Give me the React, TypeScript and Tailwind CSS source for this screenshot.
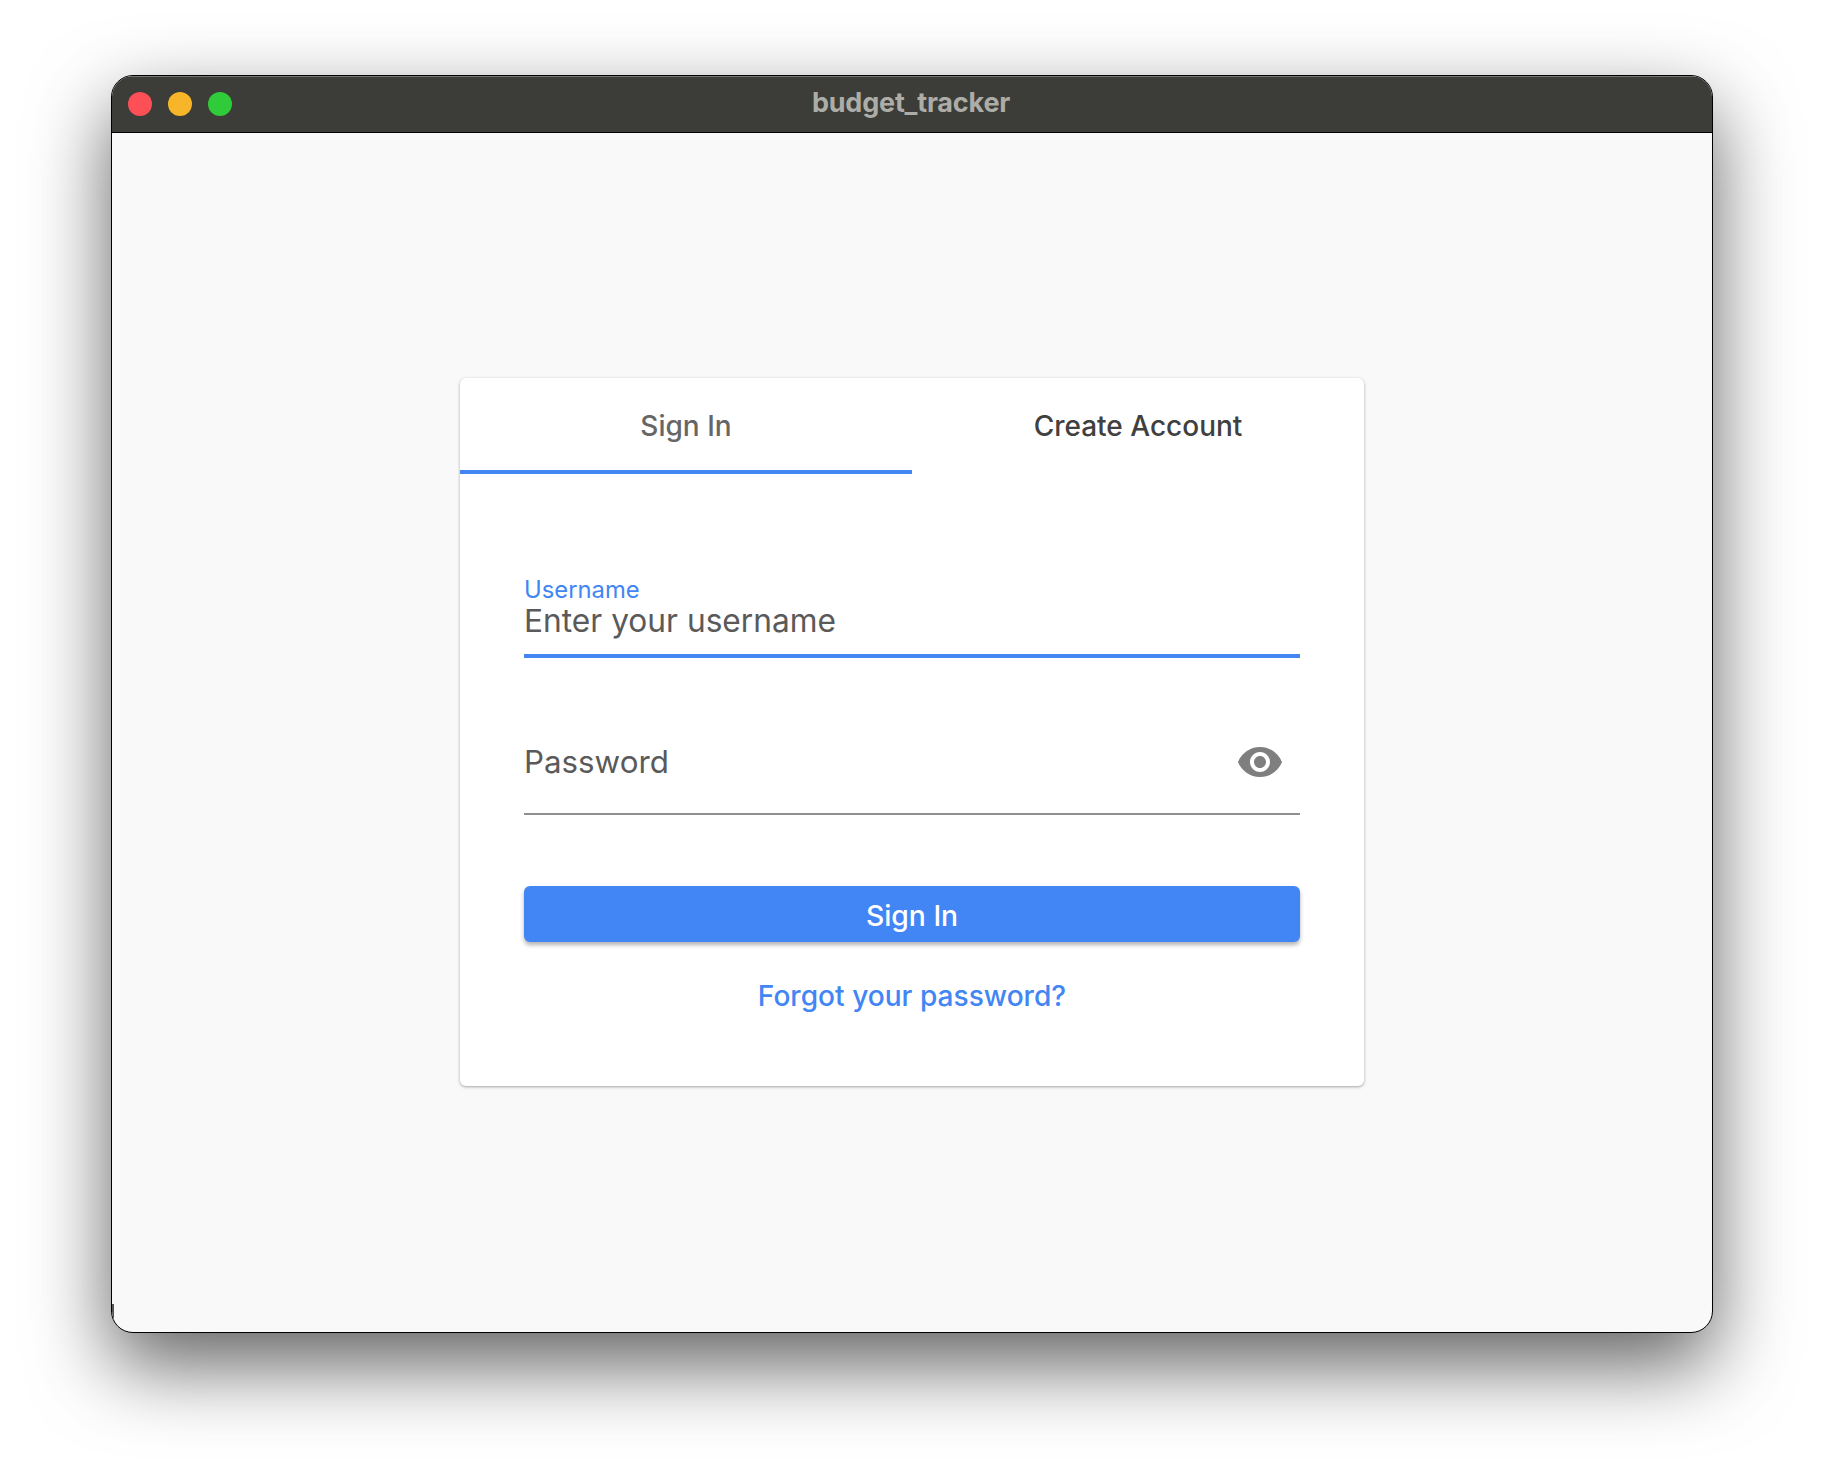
export default function App() {
  return (
    <div className="w-[1824px] h-[1480px] bg-white pt-[75px] pl-[111px] font-['Inter',sans-serif] overflow-hidden">
      <div className="relative w-[1602px] h-[1258px] rounded-[22px] border border-black bg-[#f9f9f9] shadow-[0_32px_80px_rgba(0,0,0,0.62)] overflow-hidden flex flex-col">
        <div className="relative h-[57px] shrink-0 bg-[#3c3c38] border-t border-t-[#77776f] border-b border-b-black flex items-center pl-4 pb-0.5 gap-4">
          <div className="w-6 h-6 rounded-full bg-[#fc5056]" />
          <div className="w-6 h-6 rounded-full bg-[#f7b52a]" />
          <div className="w-6 h-6 rounded-full bg-[#30cb38]" />
          <div className="absolute inset-0 flex items-center justify-center pb-[2px] pr-0.5 text-[27px] font-bold tracking-[-0.2px] text-[#adada8]">budget_tracker</div>
        </div>
        <div className="flex-1 flex justify-center pt-[245px]">
          <div className="w-[904px] h-[708px] bg-white rounded-[6px] shadow-[0_1px_3px_rgba(0,0,0,0.35)] flex flex-col">
            <div className="flex h-[96px] text-[28px]">
              <div className="w-1/2 flex items-center justify-center border-b-4 border-b-[#4285f4] font-medium text-[#666666] pt-1">Sign In</div>
              <div className="w-1/2 flex items-center justify-center font-medium text-[#404040]">Create Account</div>
            </div>
            <div className="px-16 pt-[104px] flex flex-col">
              <div className="h-[80px] border-b-4 border-b-[#4285f4] flex flex-col">
                <div className="text-[23.8px] leading-[24px] text-[#4285f4]">Username</div>
                <div className="text-[31.7px] leading-[36px] text-[#5a5a5a] mt-[1px]">Enter your username</div>
              </div>
              <div className="h-[79px] mt-[78px] border-b-2 border-b-[#8f8f8f] flex items-center justify-between pr-4 pb-[25px]">
                <div className="text-[31.3px] leading-[36px] text-[#5a5a5a]">Password</div>
                <svg width="48" height="48" viewBox="0 0 24 24" fill="#7f7f7f"><path d="M12 4.5C7 4.5 2.73 7.61 1 12c1.73 4.39 6 7.5 11 7.5s9.27-3.11 11-7.5c-1.73-4.39-6-7.5-11-7.5zM12 17c-2.76 0-5-2.24-5-5s2.24-5 5-5 5 2.24 5 5-2.24 5-5 5zm0-8c-1.66 0-3 1.34-3 3s1.34 3 3 3 3-1.34 3-3-1.34-3-3-3z" /></svg>
              </div>
              <button className="mt-[71px] h-[56px] rounded-[6px] bg-[#4285f4] text-white text-[28.3px] font-medium pt-1 shadow-[0_3px_4px_rgba(0,0,0,0.3)]">Sign In</button>
              <div className="mt-[36px] text-center text-[28.1px] leading-[36px] font-medium text-[#4285f4]">Forgot your password?</div>
            </div>
          </div>
        </div>
        <div className="absolute left-0 bottom-[14px] w-[2px] h-[14px] bg-[#555555]" />
      </div>
    </div>
  );
}
